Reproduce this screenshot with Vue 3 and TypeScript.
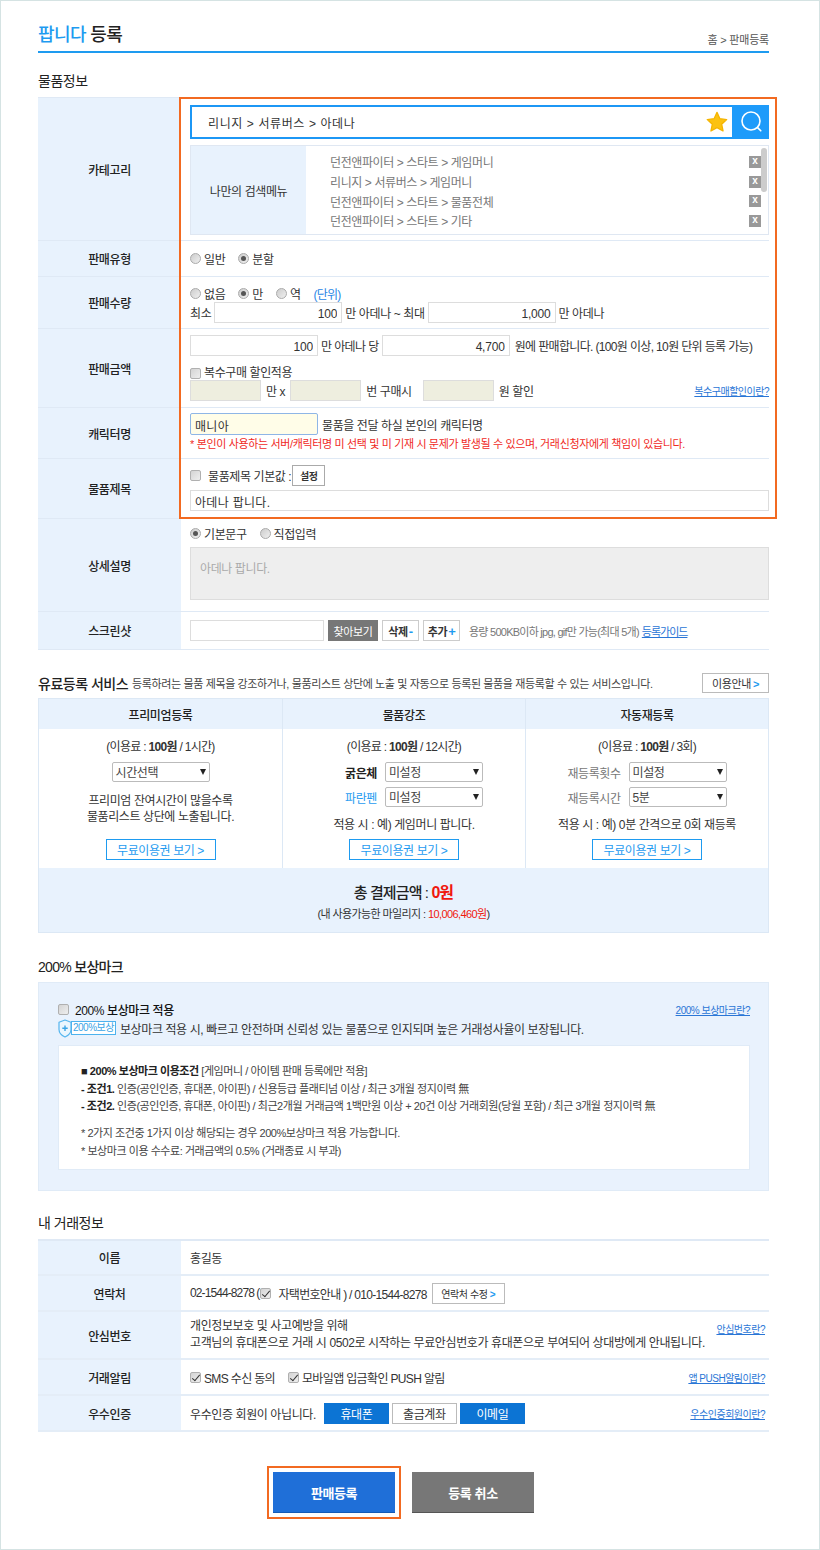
<script setup lang="ts">
import { ref } from 'vue'

interface Row {
  label: string
  value: string
}

const favorites = ref<string[]>([
  '던전앤파이터 > 스타트 > 게임머니',
  '리니지 > 서류버스 > 게임머니',
  '던전앤파이터 > 스타트 > 물품전체',
  '던전앤파이터 > 스타트 > 기타'
])

const boldRows = ref<Row[]>([
  { label: '굵은체', value: '미설정' },
  { label: '파란펜', value: '미설정' }
])

const repeatRows = ref<Row[]>([
  { label: '재등록횟수', value: '미설정' },
  { label: '재등록시간', value: '5분' }
])
</script>

<template>
  <div class="page">
    <header class="page-head">
      <h1><em>팝니다</em> 등록</h1>
      <span class="crumb">홈 &gt; 판매등록</span>
    </header>

    <h2 class="sec-title">물품정보</h2>
    <div class="form-wrap">
      <div class="row row-cat">
        <div class="head">카테고리</div>
        <div class="body body-top">
          <div class="search">
            <span class="search-text">리니지 &gt; 서류버스 &gt; 아데나</span>
            <svg class="star" width="22" height="22" viewBox="0 0 24 24">
              <path d="M12 1.500l3.200 6.900 7.400.9-5.500 5.100 1.500 7.400-6.600-3.700-6.600 3.700 1.500-7.400-5.500-5.100 7.400-.9z" fill="#fcc211" stroke="#f5b400" stroke-width="1.400" stroke-linejoin="round" />
            </svg>
            <span class="search-btn">
              <svg width="24" height="24" viewBox="0 0 24 24" fill="none" stroke="#fff" stroke-width="1.600" stroke-linecap="round">
                <circle cx="11" cy="11" r="9" />
                <path d="M17.600 17.600l3.200 3.200" />
              </svg>
            </span>
          </div>
          <div class="fav">
            <div class="fav-label">나만의 검색메뉴</div>
            <ul class="fav-list">
              <li v-for="item in favorites" :key="item">
                <span>{{ item }}</span>
                <b class="fav-x">x</b>
              </li>
            </ul>
            <i class="fav-thumb"></i>
          </div>
        </div>
      </div>

      <div class="row row-type">
        <div class="head">판매유형</div>
        <div class="body">
          <div class="line">
            <label class="opt"><i class="radio"></i>일반</label>
            <label class="opt"><i class="radio on"></i>분할</label>
          </div>
        </div>
      </div>

      <div class="row row-qty">
        <div class="head">판매수량</div>
        <div class="body body-qty">
          <div class="line">
            <label class="opt"><i class="radio"></i>없음</label>
            <label class="opt"><i class="radio on"></i>만</label>
            <label class="opt"><i class="radio"></i>역</label>
            <a class="unit">(단위)</a>
          </div>
          <div class="line line-tight">
            <span>최소</span>
            <input class="field w128" value="100" />
            <span>만 아데나 ~ 최대</span>
            <input class="field w128" value="1,000" />
            <span>만 아데나</span>
          </div>
        </div>
      </div>

      <div class="row row-price">
        <div class="head">판매금액</div>
        <div class="body body-price">
          <div class="line line-tight">
            <input class="field w128" value="100" />
            <span class="per">만 아데나 당</span>
            <input class="field w128" value="4,700" />
            <span class="sell-note">원에 판매합니다. (100원 이상, 10원 단위 등록 가능)</span>
          </div>
          <label class="opt opt-check"><i class="check"></i>복수구매 할인적용</label>
          <div class="line line-disc">
            <input class="field field-off w71" disabled />
            <span class="after-a">만 x</span>
            <input class="field field-off w71" disabled />
            <span class="after-b">번 구매시</span>
            <input class="field field-off w71" disabled />
            <span>원 할인</span>
            <a class="help">복수구매할인이란?</a>
          </div>
        </div>
      </div>

      <div class="row row-char">
        <div class="head">캐릭터명</div>
        <div class="body body-char">
          <div class="line line-char">
            <input class="field field-active w128" value="매니아" />
            <span>물품을 전달 하실 본인의 캐릭터명</span>
          </div>
          <p class="warn">* 본인이 사용하는 서버/캐릭터명 미 선택 및 미 기재 시 문제가 발생될 수 있으며, 거래신청자에게 책임이 있습니다.</p>
        </div>
      </div>

      <div class="row row-title">
        <div class="head">물품제목</div>
        <div class="body body-title">
          <div class="line">
            <label class="opt opt-title"><i class="check"></i>물품제목 기본값 :</label>
            <button class="mini-btn" type="button">설정</button>
          </div>
          <input class="field field-left wide" value="아데나 팝니다." />
        </div>
      </div>

      <div class="row row-detail">
        <div class="head">상세설명</div>
        <div class="body body-detail">
          <div class="line">
            <label class="opt"><i class="radio on"></i>기본문구</label>
            <label class="opt"><i class="radio"></i>직접입력</label>
          </div>
          <div class="textarea">아데나 팝니다.</div>
        </div>
      </div>

      <div class="row row-shot">
        <div class="head">스크린샷</div>
        <div class="body">
          <div class="line line-shot">
            <input class="field w134" />
            <button class="find-btn" type="button">찾아보기</button>
            <button class="sq-btn" type="button">삭제<b class="minus">-</b></button>
            <button class="sq-btn" type="button">추가<b class="plus">+</b></button>
            <span class="shot-note">용량 500KB이하 jpg, gif만 가능(최대 5개)</span>
            <a class="guide">등록가이드</a>
          </div>
        </div>
      </div>

      <div class="highlight"></div>
    </div>

    <div class="paid-head">
      <h2>유료등록 서비스</h2>
      <span>등록하려는 물품 제목을 강조하거나, 물품리스트 상단에 노출 및 자동으로 등록된 물품을 재등록할 수 있는 서비스입니다.</span>
      <button class="info-btn" type="button">이용안내<b>&gt;</b></button>
    </div>
    <div class="paid">
      <div class="svc">
        <div class="svc-head">프리미엄등록</div>
        <div class="svc-body">
          <p class="svc-price">(이용료 : <b>100원</b> / 1시간)</p>
          <div class="svc-row"><span class="sel">시간선택</span></div>
          <p class="svc-text svc-text-two">프리미엄 잔여시간이 많을수록<br />물품리스트 상단에 노출됩니다.</p>
          <button class="free-btn" type="button">무료이용권 보기 &gt;</button>
        </div>
      </div>
      <div class="svc">
        <div class="svc-head">물품강조</div>
        <div class="svc-body svc-mid">
          <p class="svc-price">(이용료 : <b>100원</b> / 12시간)</p>
          <div v-for="(row, i) in boldRows" :key="row.label" class="svc-row">
            <span :class="i === 0 ? 'strong' : 'blue'">{{ row.label }}</span>
            <span class="sel">{{ row.value }}</span>
          </div>
          <p class="svc-text">적용 시 : 예) 게임머니 팝니다.</p>
          <button class="free-btn" type="button">무료이용권 보기 &gt;</button>
        </div>
      </div>
      <div class="svc">
        <div class="svc-head">자동재등록</div>
        <div class="svc-body">
          <p class="svc-price">(이용료 : <b>100원</b> / 3회)</p>
          <div v-for="row in repeatRows" :key="row.label" class="svc-row">
            <span class="muted">{{ row.label }}</span>
            <span class="sel">{{ row.value }}</span>
          </div>
          <p class="svc-text">적용 시 : 예) 0분 간격으로 0회 재등록</p>
          <button class="free-btn" type="button">무료이용권 보기 &gt;</button>
        </div>
      </div>
      <div class="total">
        <p class="total-sum">총 결제금액 : <b>0원</b></p>
        <p class="total-sub">(내 사용가능한 마일리지 : <b>10,006,460원</b>)</p>
      </div>
    </div>

    <h2 class="sec-title sec-reward">200% 보상마크</h2>
    <div class="reward">
      <div class="reward-top">
        <label class="opt reward-check"><i class="check"></i><strong>200% 보상마크 적용</strong></label>
        <a class="help">200% 보상마크란?</a>
      </div>
      <div class="reward-desc">
        <svg class="shield" width="14" height="19" viewBox="0 0 14 19" fill="none">
          <path d="M7 1l6 2.200v7.200c0 3.600-2.800 6-6 7.600-3.200-1.600-6-4-6-7.600V3.200z" fill="#eaf6fe" stroke="#55b5ee" stroke-width="1.200" stroke-linejoin="round" />
          <path d="M7 6.500v5.500M4.300 9.200h5.400" stroke="#3aa4e6" stroke-width="1.400" />
        </svg>
        <span class="badge">200%보상</span>
        <span>보상마크 적용 시, 빠르고 안전하며 신뢰성 있는 물품으로 인지되며 높은 거래성사율이 보장됩니다.</span>
      </div>
      <div class="terms">
        <p><b>■ 200% 보상마크 이용조건</b> [게임머니 / 아이템 판매 등록에만 적용]</p>
        <p><b>- 조건1.</b> 인증(공인인증, 휴대폰, 아이핀) / 신용등급 플래티넘 이상 / 최근 3개월 정지이력 無</p>
        <p><b>- 조건2.</b> 인증(공인인증, 휴대폰, 아이핀) / 최근2개월 거래금액 1백만원 이상 + 20건 이상 거래회원(당월 포함) / 최근 3개월 정지이력 無</p>
        <p class="terms-gap">* 2가지 조건중 1가지 이상 해당되는 경우 200%보상마크 적용 가능합니다.</p>
        <p>* 보상마크 이용 수수료: 거래금액의 0.5% (거래종료 시 부과)</p>
      </div>
    </div>

    <h2 class="sec-title sec-mine">내 거래정보</h2>
    <div class="mine">
      <div class="row row-name">
        <div class="head">이름</div>
        <div class="body"><span>홍길동</span></div>
      </div>
      <div class="row row-contact">
        <div class="head">연락처</div>
        <div class="body">
          <div class="line line-contact">
            <span class="tel">02-1544-8278 (</span>
            <i class="check on"></i>
            <span class="home">자택번호안내 ) / 010-1544-8278</span>
            <button class="edit-btn" type="button">연락처 수정<b>&gt;</b></button>
          </div>
        </div>
      </div>
      <div class="row row-safe">
        <div class="head">안심번호</div>
        <div class="body body-safe">
          <p>개인정보보호 및 사고예방을 위해</p>
          <p>고객님의 휴대폰으로 거래 시 0502로 시작하는 무료안심번호가 휴대폰으로 부여되어 상대방에게 안내됩니다.</p>
          <a class="help help-over">안심번호란?</a>
        </div>
      </div>
      <div class="row row-alarm">
        <div class="head">거래알림</div>
        <div class="body">
          <div class="line line-between line-alarm">
            <label class="opt"><i class="check on"></i>SMS 수신 동의</label>
            <label class="opt"><i class="check on"></i>모바일앱 입금확인 PUSH 알림</label>
            <a class="help">앱 PUSH알림이란?</a>
          </div>
        </div>
      </div>
      <div class="row row-cert">
        <div class="head">우수인증</div>
        <div class="body">
          <div class="line line-between line-cert">
            <span>우수인증 회원이 아닙니다.</span>
            <button class="cert on" type="button">휴대폰</button>
            <button class="cert" type="button">출금계좌</button>
            <button class="cert on" type="button">이메일</button>
            <a class="help">우수인증회원이란?</a>
          </div>
        </div>
      </div>
    </div>

    <div class="actions">
      <button class="act act-main" type="button">판매등록</button>
      <button class="act act-cancel" type="button">등록 취소</button>
    </div>
  </div>
</template>

<style>
body {
  background: #fff;
}
</style>

<style scoped>
.page {
  box-sizing: border-box;
  width: 820px;
  height: 1550px;
  padding: 24px 50px 0 37px;
  border: 1px solid #d5e3e3;
  font-family: "Liberation Sans", "Noto Sans CJK KR", sans-serif;
  font-size: 12px;
  letter-spacing: -0.4px;
  color: #333;
  overflow: hidden;
}
p, h1, h2, ul {
  margin: 0;
  padding: 0;
}
button {
  font-family: inherit;
  letter-spacing: inherit;
  padding: 0;
  cursor: pointer;
}
.page-head {
  display: flex;
  justify-content: space-between;
  align-items: flex-end;
  height: 26px;
  border-bottom: 2px solid #1e9bf0;
}
.page-head h1 {
  margin-bottom: 4px;
  font-size: 18px;
  line-height: 24px;
  font-weight: 500;
  letter-spacing: -0.6px;
  color: #222;
}
.page-head em {
  font-style: normal;
  color: #1e9bf0;
}
.crumb {
  margin-bottom: 1px;
  font-size: 11px;
  line-height: 20px;
  letter-spacing: -0.2px;
  color: #555;
}
.sec-title {
  height: 16px;
  margin: 20px 0 8px;
  font-size: 14px;
  line-height: 16px;
  font-weight: 400;
  letter-spacing: -0.5px;
  color: #222;
}
.form-wrap {
  position: relative;
  border-top: 1px solid #dfe9f5;
}
.row {
  display: flex;
  box-sizing: border-box;
  border-bottom: 1px solid #dfe9f5;
}
.head {
  flex: 0 0 143px;
  display: flex;
  align-items: center;
  justify-content: center;
  background: #e8f2fd;
  font-weight: 500;
  color: #222;
}
.body {
  flex: 1;
  min-width: 0;
  display: flex;
  flex-direction: column;
  justify-content: center;
  padding-left: 9px;
}
.row-cat { height: 143px; }
.row-type { height: 36px; }
.row-qty { height: 52px; }
.row-price { height: 79px; }
.row-char { height: 51px; }
.row-title { height: 60px; }
.row-detail { height: 93px; }
.row-shot { height: 38px; }
.body-top {
  justify-content: flex-start;
  padding-top: 7px;
}
.search {
  display: flex;
  align-items: center;
  box-sizing: border-box;
  height: 34px;
  border: 2px solid #1c97f5;
  border-right: 0;
  background: #fff;
}
.search-text {
  flex: 1;
  padding-left: 16px;
  letter-spacing: 0.6px;
  color: #333;
}
.star {
  margin-right: 4px;
}
.search-btn {
  display: flex;
  align-items: center;
  justify-content: center;
  width: 37px;
  height: 34px;
  margin: -2px 0;
  padding-left: 3px;
  box-sizing: border-box;
  background: #1e9bfa;
}
.fav {
  position: relative;
  display: flex;
  box-sizing: border-box;
  height: 90px;
  margin-top: 6px;
  border: 1px solid #dfe7f2;
}
.fav-label {
  flex: 0 0 115px;
  display: flex;
  align-items: center;
  justify-content: center;
  background: #e8f2fd;
}
.fav-list {
  flex: 1;
  list-style: none;
  padding: 6px 7px 0 24px;
  color: #777;
}
.fav-list li {
  display: flex;
  align-items: center;
  justify-content: space-between;
  height: 19.700px;
}
.fav-x {
  width: 12px;
  height: 12px;
  background: #999;
  color: #fff;
  font-size: 10px;
  line-height: 10px;
  letter-spacing: 0;
  text-align: center;
}
.fav-thumb {
  position: absolute;
  top: 2px;
  right: 1px;
  width: 6px;
  height: 44px;
  border-radius: 3px;
  background: #ccc;
}
.line {
  display: flex;
  align-items: center;
}
.line-tight {
  gap: 3px;
}
.opt {
  display: inline-flex;
  align-items: center;
  gap: 3px;
  margin-right: 13px;
}
.radio {
  box-sizing: border-box;
  display: inline-flex;
  align-items: center;
  justify-content: center;
  width: 11px;
  height: 11px;
  border: 1px solid #aaa;
  border-radius: 50%;
  background: linear-gradient(135deg, #ccc, #f0f0f0);
}
.radio.on::after {
  content: "";
  width: 5px;
  height: 5px;
  border-radius: 50%;
  background: #555;
}
.check {
  box-sizing: border-box;
  position: relative;
  display: inline-block;
  flex: none;
  width: 11px;
  height: 11px;
  border: 1px solid #b0b0b0;
  border-radius: 2px;
  background: linear-gradient(135deg, #d4d4d4, #eee);
}
.check.on::after {
  content: "";
  position: absolute;
  left: 3px;
  top: 0;
  width: 3px;
  height: 7px;
  border: solid #333;
  border-width: 0 1.500px 1.500px 0;
  transform: rotate(40deg);
}
.unit {
  letter-spacing: -0.8px;
  color: #2a86e6;
}
.body-qty {
  justify-content: flex-start;
  padding-top: 8px;
}
.field {
  box-sizing: border-box;
  height: 21px;
  padding: 2px 4px 0;
  border: 1px solid #ddd;
  background: #fff;
  font-family: inherit;
  font-size: 12px;
  letter-spacing: -0.2px;
  color: #333;
  text-align: right;
  outline: none;
}
.w128 { width: 128px; }
.w71 { width: 71px; }
.w134 { width: 134px; }
.wide { width: 100%; }
.field-off {
  background: #eeeedf;
}
.field-left,
.field-active {
  text-align: left;
  letter-spacing: 0.3px;
}
.field-active {
  height: 22px;
  border: 1px solid #8fb6e6;
  border-radius: 2px;
  background: #fffde8;
}
.body-price {
  justify-content: flex-start;
  padding-top: 6px;
}
.per {
  letter-spacing: -0.6px;
}
.sell-note {
  margin-left: 2px;
  letter-spacing: -0.65px;
}
.opt-check {
  margin-top: 10px;
  line-height: 14px;
}
.after-a {
  margin: 0 5px 0 5px;
}
.after-b {
  margin: 0 11px 0 5px;
}
.line-disc span:nth-of-type(3) {
  margin-left: 5px;
}
.help {
  margin-left: auto;
  font-size: 10px;
  letter-spacing: -0.5px;
  color: #2a76d6;
  text-decoration: underline;
}
.body-char {
  justify-content: flex-start;
  padding-top: 5px;
}
.line-char {
  gap: 4px;
}
.warn {
  font-size: 11px;
  line-height: 18px;
  letter-spacing: -0.35px;
  color: #f02a1e;
}
.body-title {
  justify-content: flex-start;
  padding-top: 6px;
}
.opt-title {
  gap: 7px;
  margin-right: 1px;
}
.mini-btn {
  width: 33px;
  height: 21px;
  border: 1px solid #aaa;
  background: #fff;
  font-size: 10px;
  font-weight: 700;
  color: #333;
}
.body-title .field {
  margin-top: 4px;
}
.body-detail {
  justify-content: flex-start;
  padding-top: 6px;
}
.textarea {
  box-sizing: border-box;
  height: 53px;
  margin-top: 5px;
  padding: 11px 9px;
  border: 1px solid #ddd;
  background: #eee;
  color: #aaa;
}
.line-shot {
  font-size: 11px;
}
.find-btn {
  width: 50px;
  height: 21px;
  margin-left: 4px;
  border: 0;
  background: #777;
  color: #fff;
  font-size: 11px;
}
.sq-btn {
  width: 37px;
  height: 21px;
  margin-left: 4px;
  border: 1px solid #ccc;
  background: #fff;
  font-size: 11px;
  font-weight: 700;
  color: #333;
}
.minus, .plus {
  margin-left: 1px;
  font-size: 13px;
  line-height: 12px;
  color: #1e9bf0;
}
.shot-note {
  margin-left: 9px;
  color: #777;
  letter-spacing: -0.75px;
}
.guide {
  margin-left: 3px;
  letter-spacing: -1px;
  color: #2a76d6;
  text-decoration: underline;
}
.highlight {
  position: absolute;
  top: -1px;
  left: 141px;
  width: 598px;
  height: 422px;
  box-sizing: border-box;
  border: 2px solid #f26a21;
  pointer-events: none;
}
.paid-head {
  display: flex;
  align-items: center;
  height: 20px;
  margin: 23px 0 5px;
  font-size: 11px;
  letter-spacing: -0.37px;
  color: #444;
}
.paid-head h2 {
  margin-right: 4px;
  font-size: 14px;
  font-weight: 500;
  letter-spacing: -0.5px;
  color: #222;
}
.info-btn {
  width: 67px;
  height: 20px;
  margin-left: auto;
  border: 1px solid #bbb;
  background: #fff;
  font-size: 11px;
  color: #333;
}
.info-btn b,
.edit-btn b {
  margin-left: 2px;
  color: #1e9bf0;
}
.paid {
  display: grid;
  grid-template-columns: repeat(3, 1fr);
  grid-template-rows: 169px 1fr;
  box-sizing: border-box;
  height: 235px;
  border: 1px solid #dce8f5;
}
.svc {
  display: flex;
  flex-direction: column;
  border-left: 1px solid #dce8f5;
}
.svc:first-child {
  border-left: 0;
}
.svc-head {
  height: 30px;
  flex: none;
  display: flex;
  align-items: center;
  justify-content: center;
  background: #e8f2fd;
  font-weight: 500;
  color: #222;
}
.svc-body {
  flex: 1;
  display: flex;
  flex-direction: column;
  align-items: center;
  padding: 10px 0 8px;
}
.svc-price {
  height: 16px;
  margin-bottom: 7px;
  line-height: 16px;
  letter-spacing: -0.7px;
}
.svc-row {
  display: flex;
  align-items: center;
  gap: 8px;
  height: 20px;
  margin-bottom: 5px;
}
.svc-mid .svc-row {
  padding-left: 20px;
}
.strong {
  font-weight: 700;
  color: #222;
}
.blue {
  color: #1e9bf0;
}
.muted {
  color: #777;
}
.sel {
  position: relative;
  box-sizing: border-box;
  width: 98px;
  height: 20px;
  padding: 0 3px;
  border: 1px solid #bbb;
  border-radius: 2px;
  background: #fff;
  line-height: 20px;
  color: #444;
}
.sel::after {
  content: "";
  position: absolute;
  top: 6px;
  right: 3px;
  border: 3.500px solid transparent;
  border-top: 6px solid #222;
  border-bottom: 0;
}
.svc-text {
  height: 16px;
  margin-top: 5px;
  line-height: 16px;
  text-align: center;
}
.svc-text-two {
  height: 31px;
  margin-top: 7px;
  line-height: 15.500px;
}
.free-btn {
  width: 110px;
  height: 21px;
  margin-top: auto;
  border: 1px solid #1e9bf0;
  background: #fff;
  font-size: 12px;
  color: #1e9bf0;
}
.total {
  grid-column: 1 / 4;
  display: flex;
  flex-direction: column;
  align-items: center;
  padding-top: 14px;
  background: #e8f2fd;
}
.total-sum {
  font-size: 15px;
  line-height: 22px;
  font-weight: 500;
  letter-spacing: -0.9px;
  color: #222;
}
.total-sum b {
  color: #f0180e;
  font-size: 16px;
}
.total-sub {
  margin-top: 3px;
  font-size: 11px;
  line-height: 14px;
  letter-spacing: -0.6px;
}
.total-sub b {
  font-weight: 400;
  color: #f0180e;
}
.sec-reward {
  margin: 26px 0 7px;
  font-weight: 500;
  letter-spacing: -0.7px;
}
.reward {
  box-sizing: border-box;
  height: 209px;
  padding: 18px 18px 0 19px;
  border: 1px solid #e0ebf7;
  background: #e9f2fd;
}
.reward-top {
  display: flex;
  align-items: center;
  height: 16px;
}
.reward-check {
  gap: 6px;
}
.reward-check strong {
  font-weight: 500;
  color: #111;
}
.reward-desc {
  display: flex;
  align-items: center;
  height: 20px;
  margin-top: 1px;
  color: #333;
}
.shield {
  flex: none;
}
.badge {
  margin: 0 4px 0 -1px;
  padding: 0 1px;
  border: 1px solid #4db2ee;
  background: #fff;
  font-size: 10px;
  line-height: 12px;
  letter-spacing: -0.5px;
  color: #3aa4e6;
}
.terms {
  box-sizing: border-box;
  height: 125px;
  margin-top: 7px;
  padding: 17px 22px 0;
  border: 1px solid #e0ebf7;
  background: #fff;
  font-size: 11px;
  letter-spacing: -0.45px;
  color: #444;
}
.terms p {
  height: 17.700px;
  line-height: 17.700px;
}
.terms b {
  font-weight: 700;
  color: #222;
}
.terms .terms-gap {
  margin-top: 9px;
}
.sec-mine {
  margin: 24px 0 8px;
}
.mine {
  border-top: 2px solid #dfe9f5;
}
.mine .row {
  border-bottom-width: 2px;
  border-color: #e4edf7;
}
.row-name { height: 35px; }
.row-contact { height: 36px; }
.row-safe { height: 48px; }
.row-alarm { height: 36px; }
.row-cert { height: 36px; }
.tel {
  letter-spacing: -0.9px;
}
.home {
  letter-spacing: -0.7px;
}
.line-contact .check {
  margin: 0 7px 0 1px;
}
.edit-btn {
  width: 73px;
  height: 21px;
  margin-left: 5px;
  border: 1px solid #bbb;
  background: #fff;
  font-size: 10px;
  color: #333;
}
.body-safe {
  position: relative;
  line-height: 17px;
}
.help-over {
  position: absolute;
  top: 9px;
  right: 4px;
}
.line-between {
  padding-right: 4px;
}
.line-alarm .opt {
  letter-spacing: -0.65px;
}
.line-cert {
  gap: 3px;
}
.line-cert > span {
  margin-right: 5px;
}
.cert {
  box-sizing: border-box;
  width: 65px;
  height: 21px;
  border: 1px solid #bbb;
  background: #fff;
  font-size: 12px;
  color: #333;
}
.cert.on {
  border-color: #0c74d4;
  background: #0c74d4;
  color: #fff;
}
.actions {
  display: flex;
  justify-content: center;
  gap: 17px;
  margin-top: 40px;
}
.act {
  width: 122px;
  height: 41px;
  border: 0;
  font-size: 13px;
  font-weight: 700;
  color: #fff;
}
.act-main {
  background: #1f6fd8;
  border-bottom: 1px solid #155bb5;
  outline: 2px solid #f26a21;
  outline-offset: 4px;
}
.act-cancel {
  background: #777;
  border-bottom: 1px solid #555;
}
</style>
